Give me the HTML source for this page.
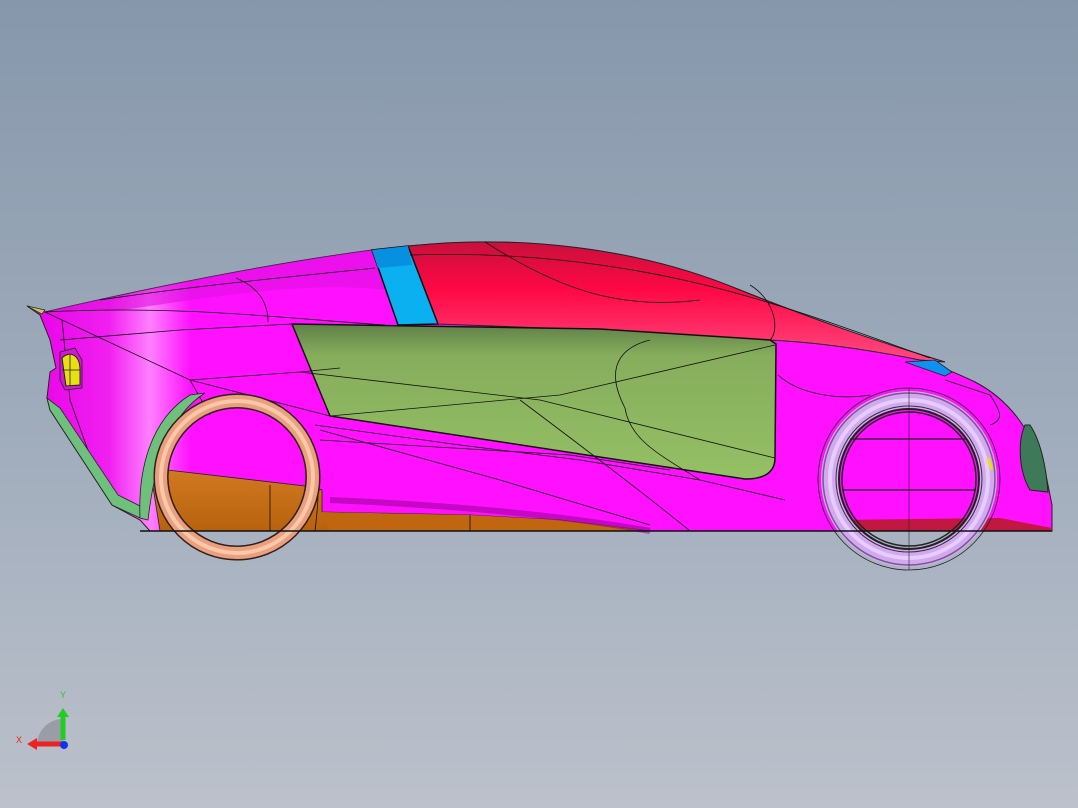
<!DOCTYPE html>
<html><head><meta charset="utf-8"><style>
html,body{margin:0;padding:0;width:1078px;height:808px;overflow:hidden}
svg{display:block}
</style></head><body>
<svg width="1078" height="808" viewBox="0 0 1078 808" xmlns="http://www.w3.org/2000/svg" font-family="Liberation Sans, sans-serif">
<defs>
<linearGradient id="bg" x1="0" y1="0" x2="0" y2="1">
<stop offset="0" stop-color="#8797ab"/><stop offset="0.5" stop-color="#9eabbb"/><stop offset="1" stop-color="#bcc1cb"/>
</linearGradient>
<linearGradient id="red" x1="0" y1="0" x2="0" y2="1">
<stop offset="0" stop-color="#c8103c"/><stop offset="0.4" stop-color="#ff0844"/><stop offset="1" stop-color="#ff4a82"/>
</linearGradient>
<linearGradient id="grn" x1="0" y1="0" x2="0" y2="1">
<stop offset="0" stop-color="#5f7f48"/><stop offset="0.2" stop-color="#86ad5c"/><stop offset="1" stop-color="#95c065"/>
</linearGradient>
<linearGradient id="mag" x1="0" y1="0" x2="1" y2="0">
<stop offset="0" stop-color="#e800e8"/><stop offset="0.08" stop-color="#f020f0"/><stop offset="0.12" stop-color="#ff80ff"/><stop offset="0.16" stop-color="#ff10ff"/><stop offset="1" stop-color="#ff10ff"/>
</linearGradient>
<linearGradient id="ora" x1="0" y1="0" x2="0" y2="1">
<stop offset="0" stop-color="#d27a22"/><stop offset="1" stop-color="#b8620e"/>
</linearGradient>
</defs>
<rect width="1078" height="808" fill="url(#bg)"/>

<path d="M27,306 L45,312 C140,290 260,265 372,250 L408,246 C520,236 640,250 740,290 C840,330 930,360 975,382 C1010,400 1030,430 1045,470 L1052,505 L1052,531 L150,531 L140,520 L112,505 L50,410 L47,398 L50,372 L56,368 L50,340 L40,315 Z" fill="url(#mag)" stroke="#222" stroke-width="1"/>
<path d="M45,312 C140,290 260,265 372,250 L385,290 C300,280 200,300 120,310 Z" fill="#e010e0" opacity="0.6"/>
<path d="M408,246 C520,234 640,248 740,290 C840,330 900,348 945,362 L920,360 C860,348 810,342 770,340 L600,330 L438,324 Z" fill="url(#red)" stroke="#222" stroke-width="1"/>
<path d="M372,250 L408,246 L438,324 L398,325 Z" fill="#0ab0f0" stroke="#111" stroke-width="1.5"/>
<path d="M372,250 L408,246 L412,265 L378,268 Z" fill="#0890e0"/>
<path d="M905,362 L935,360 L952,372 L945,376 Z" fill="#1090f0" stroke="#222" stroke-width="0.8"/>
<path d="M292,324 L600,329 L770,340 L776,344 L775,458 Q775,479 745,479 L330,416 Z" fill="url(#grn)" stroke="#111" stroke-width="1.5"/>
<path d="M150,468 L305,486 L322,490 L322,512 L470,515 L560,520 L650,531 L160,531 Z" fill="url(#ora)" stroke="#222" stroke-width="0.8"/>
<path d="M322,512 L470,515 L560,520 L650,531 L330,531 Z" fill="#c06610"/>
<path d="M330,500 C450,505 560,515 650,531" fill="none" stroke="#8a008a" stroke-width="6" opacity="0.5"/>
<path d="M840,520 L1000,518 L1052,528 L1052,531 L840,531 Z" fill="#c01840"/>
<g fill="none" stroke="#111" stroke-width="0.8">
<path d="M45,312 C180,305 280,318 385,325"/>
<path d="M100,300 C200,285 300,276 375,268"/>
<path d="M236,278 C265,290 268,310 268,322"/>
<path d="M410,255 C500,252 620,258 760,300 C820,318 880,340 930,358"/>
<path d="M485,242 C560,290 620,310 700,300"/>
<path d="M750,285 C775,300 780,330 770,340"/>
<path d="M45,312 L190,380 L330,416"/>
<path d="M60,340 L180,330 L292,324"/>
<path d="M190,380 L300,372 L340,368"/>
<path d="M300,372 L540,400 L775,458"/>
<path d="M330,416 L560,395 L775,345"/>
<path d="M190,380 L210,415 M62,320 L70,400 L95,470 L120,505"/>
<path d="M315,425 L460,445 L580,460 L700,480 L785,500"/>
<path d="M320,430 L500,480 L650,525"/>
<path d="M625,408 C600,360 630,345 650,340 M625,408 C630,440 660,455 700,480"/>
<path d="M320,440 L570,455 L670,470"/>
<path d="M520,400 C560,430 640,490 690,531"/>
<path d="M778,375 C800,395 840,400 870,395"/>
<path d="M945,380 L990,395 C1000,410 1005,420 990,425"/>
<path d="M310,440 C320,460 320,490 315,531"/>
<path d="M270,485 L270,531 M470,515 L470,531"/>
</g>
<path d="M60,352 L75,348 L82,360 L82,388 L65,390 L60,380 Z" fill="#d01ad0" stroke="#222" stroke-width="0.8"/>
<path d="M62,358 C70,350 80,355 80,370 L80,385 L66,386 Z" fill="#e8e010" stroke="#222" stroke-width="1"/>
<path d="M62,370 L80,370 M70,355 L70,386" stroke="#222" stroke-width="0.8"/>
<path d="M27,306 L45,310 L42,314 Z" fill="#c8c860" stroke="#222" stroke-width="0.7"/>
<path d="M47,398 L50,410 L112,505 L140,518 L140,506 L118,495 L60,408 Z" fill="#6ec07c" stroke="#222" stroke-width="0.8"/>
<path d="M140,518 C138,470 150,420 190,395 L205,393 C170,415 155,460 148,520 Z" fill="#6ec07c" stroke="#222" stroke-width="0.8"/>
<circle cx="237" cy="477" r="76" fill="none" stroke="#5a2a1a" stroke-width="15"/>
<circle cx="237" cy="477" r="76" fill="none" stroke="#eaa080" stroke-width="12"/>
<circle cx="237" cy="477" r="76" fill="none" stroke="#f8c8a8" stroke-width="4"/>
<circle cx="237" cy="477" r="69" fill="none" stroke="#222" stroke-width="1"/>
<circle cx="237" cy="477" r="83" fill="none" stroke="#222" stroke-width="1"/>
<circle cx="909" cy="479" r="91" fill="none" stroke="#222" stroke-width="0.8"/>
<circle cx="909" cy="479" r="79" fill="none" stroke="#d2a8f0" stroke-width="18"/>
<circle cx="909" cy="479" r="86" fill="none" stroke="#7a5a8a" stroke-width="1.5"/>
<circle cx="909" cy="479" r="79" fill="none" stroke="#e6ccff" stroke-width="4"/>
<circle cx="909" cy="479" r="73" fill="none" stroke="#333" stroke-width="1"/>
<circle cx="909" cy="479" r="70" fill="none" stroke="#222" stroke-width="2"/>
<circle cx="909" cy="479" r="67" fill="none" stroke="#222" stroke-width="1.5"/>
<path d="M850,439 L966,439 M843,490 L975,490" stroke="#222" stroke-width="1.2"/>
<path d="M909,388 L909,570" stroke="#222" stroke-width="0.6"/>
<path d="M988,458 L992,470" stroke="#e8e010" stroke-width="3"/>
<path d="M1025,425 C1018,440 1018,470 1030,490 L1048,492 C1046,465 1040,440 1030,425 Z" fill="#3e7a5a" stroke="#222" stroke-width="1"/>
<path d="M140,531 L1052,531" stroke="#111" stroke-width="1.5"/>

<path d="M37,745 A26,26 0 0 1 63,719 L63,745 Z" fill="#999ea6"/>
<path d="M63,740 L63,716" stroke="#2c2" stroke-width="5"/>
<path d="M57,717 L63,708 L69,717 Z" fill="#2c2"/>
<path d="M63,744 L36,744" stroke="#e22" stroke-width="5"/>
<path d="M37,738 L27,744 L37,750 Z" fill="#e22"/>
<circle cx="64" cy="745" r="4" fill="#13e"/>
<text x="60" y="698" font-size="9" fill="#2c2">Y</text>
<text x="16" y="743" font-size="9" fill="#e22">X</text>
</svg>
</body></html>
